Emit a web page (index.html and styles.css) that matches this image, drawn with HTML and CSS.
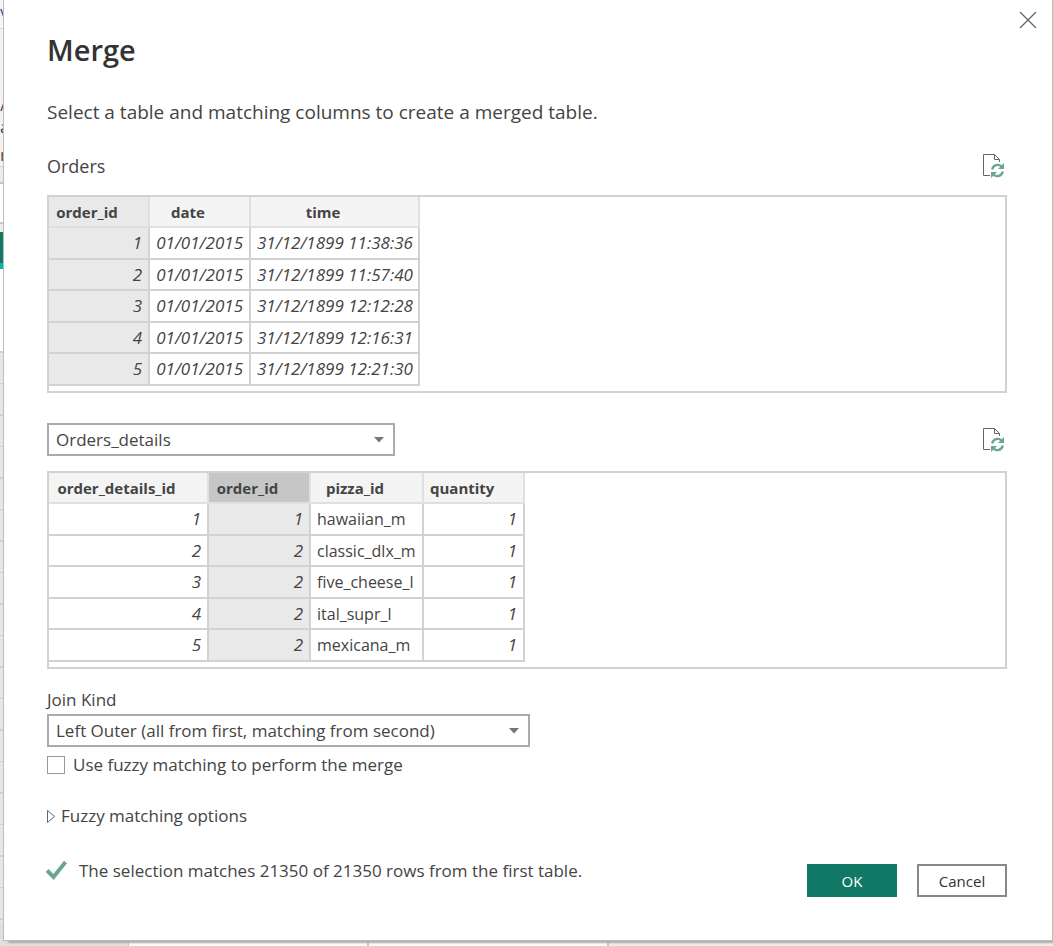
FILE: index.html
```html
<!DOCTYPE html>
<html lang="en">
<head>
<meta charset="utf-8">
<title>Merge</title>
<link rel="stylesheet" href="styles.css">
</head>
<body>
<div class="workspace" aria-hidden="true">
  <div class="ribbon-tabs">v</div>
  <div class="ribbon"><span>/</span><span>a</span><span class="group">r</span></div>
  <div class="ribbon-foot"></div>
  <div class="formula"></div>
  <div class="spacer"></div>
  <div class="query"></div>
  <div class="query-bar"></div>
  <div class="query-head"></div>
  <div class="row-numbers"></div>
  <div class="data-row"><div class="row-no"></div><div class="data">01/01/2015</div><div class="data">01/01/2015</div><div class="rest"></div></div>
</div>

<main class="dialog" role="dialog" aria-labelledby="title">
  <button class="close" type="button" aria-label="Close">
    <svg width="18" height="18" viewBox="0 0 18 18"><path d="M1 1L17 17M17 1L1 17" fill="none" stroke="#666" stroke-width="1.3"/></svg>
  </button>
  <h1 id="title">Merge</h1>
  <p class="intro">Select a table and matching columns to create a merged table.</p>

  <div class="bar first">
    <h2>Orders</h2>
    <button class="refresh" type="button" aria-label="Refresh Orders">
      <svg width="22" height="24" viewBox="0 0 22 24"><path d="M7 21.5H.5V.5H11.5L16.5 5.500V8M11.500.5V5.500H16.500" fill="none" stroke="#666"/><path d="M9.200 15.500A5.500 5.500 0 0 1 18.500 12.500M19.800 17.500A5.500 5.500 0 0 1 10.500 20.500" fill="none" stroke="#6aa793" stroke-width="2.400"/><path d="M21 9V15H15ZM8 24V18H14Z" fill="#6aa793"/></svg>
    </button>
  </div>
  <div class="preview">
    <table>
      <colgroup><col class="w-id"><col class="w-date"><col class="w-time"></colgroup>
      <thead><tr><th class="picked">order_id</th><th>date</th><th>time</th></tr></thead>
      <tbody>
        <tr><td class="picked">1</td><td>01/01/2015</td><td>31/12/1899 11:38:36</td></tr>
        <tr><td class="picked">2</td><td>01/01/2015</td><td>31/12/1899 11:57:40</td></tr>
        <tr><td class="picked">3</td><td>01/01/2015</td><td>31/12/1899 12:12:28</td></tr>
        <tr><td class="picked">4</td><td>01/01/2015</td><td>31/12/1899 12:16:31</td></tr>
        <tr><td class="picked">5</td><td>01/01/2015</td><td>31/12/1899 12:21:30</td></tr>
      </tbody>
    </table>
  </div>

  <div class="bar second">
    <div class="combo table-combo">
      <select aria-label="Second table"><option>Orders_details</option></select>
      <svg width="10" height="6" viewBox="0 0 10 6"><path d="M0 0H10L5 5.500Z" fill="#767676"/></svg>
    </div>
    <button class="refresh" type="button" aria-label="Refresh Orders_details">
      <svg width="22" height="24" viewBox="0 0 22 24"><path d="M7 21.5H.5V.5H11.5L16.5 5.500V8M11.500.5V5.500H16.500" fill="none" stroke="#666"/><path d="M9.200 15.500A5.500 5.500 0 0 1 18.500 12.500M19.800 17.500A5.500 5.500 0 0 1 10.500 20.500" fill="none" stroke="#6aa793" stroke-width="2.400"/><path d="M21 9V15H15ZM8 24V18H14Z" fill="#6aa793"/></svg>
    </button>
  </div>
  <div class="preview">
    <table>
      <colgroup><col class="w-details"><col class="w-order"><col class="w-pizza"><col class="w-id"></colgroup>
      <thead><tr><th>order_details_id</th><th class="picked active">order_id</th><th>pizza_id</th><th>quantity</th></tr></thead>
      <tbody>
        <tr><td>1</td><td class="picked">1</td><td class="text">hawaiian_m</td><td>1</td></tr>
        <tr><td>2</td><td class="picked">2</td><td class="text">classic_dlx_m</td><td>1</td></tr>
        <tr><td>3</td><td class="picked">2</td><td class="text">five_cheese_l</td><td>1</td></tr>
        <tr><td>4</td><td class="picked">2</td><td class="text">ital_supr_l</td><td>1</td></tr>
        <tr><td>5</td><td class="picked">2</td><td class="text">mexicana_m</td><td>1</td></tr>
      </tbody>
    </table>
  </div>

  <label class="join-label" for="join">Join Kind</label>
  <div class="combo join-combo">
    <select id="join"><option>Left Outer (all from first, matching from second)</option></select>
    <svg width="10" height="6" viewBox="0 0 10 6"><path d="M0 0H10L5 5.500Z" fill="#767676"/></svg>
  </div>
  <label class="fuzzy"><input type="checkbox">Use fuzzy matching to perform the merge</label>

  <button class="expander" type="button" aria-expanded="false">
    <svg width="8" height="13" viewBox="0 0 8 13"><path d="M.5 .5L7.500 6.500L.5 12.500Z" fill="none" stroke="#666"/></svg>
    Fuzzy matching options
  </button>

  <div class="footer">
    <p class="status">
      <svg width="22" height="20" viewBox="0 0 22 20"><path d="M1 9.500L7.500 16L19.500 1" fill="none" stroke="#6aa793" stroke-width="4"/></svg>
      The selection matches 21350 of 21350 rows from the first table.
    </p>
    <div class="actions">
      <button class="ok" type="button">OK</button>
      <button class="cancel" type="button">Cancel</button>
    </div>
  </div>
</main>
</body>
</html>
```
FILE: styles.css
```css
* { box-sizing: border-box; }

body {
  margin: 0;
  min-height: 100vh;
  display: grid;
  grid-template-columns: minmax(0, 1fr);
  overflow: hidden;
  font: 17px/24px "Open Sans", "Noto Sans", sans-serif;
  color: #444;
}

h1, h2, p { margin: 0; }
button, select { font: inherit; color: inherit; }
button { padding: 0; border: 0; background: none; }
svg { display: block; flex: none; }

/* Editor window behind the dialog */
.workspace {
  grid-area: 1 / 1;
  display: flex;
  flex-direction: column;
  background: #e6e6e6;
}
.ribbon-tabs { height: 29px; background: #f5f5f5; border-bottom: 1px solid #dcdcdc; color: #2b579a; line-height: 24px; }
.ribbon { height: 138px; display: flex; flex-direction: column; justify-content: flex-end; background: #f3f2f1; border-bottom: 1px solid #d2d0ce; line-height: 22px; }
.group { margin-top: 6px; }
.ribbon-foot { height: 17px; background: #edebe9; border-bottom: 2px solid #c8c6c4; }
.formula { height: 40px; background: #fff; border-bottom: 2px solid #c8c6c4; }
.spacer { height: 8px; background: #edebe9; }
.query { height: 31px; background: #117865; }
.query-bar { height: 6px; background: #01b8aa; }
.query-head { height: 84px; background: #fff; border-bottom: 2px solid #d0d0d0; }
.row-numbers {
  flex: 1;
  background: repeating-linear-gradient(#e6e6e6 0 30px, #d0d0d0 30px 31px, #e6e6e6 31px 61px, #d0d0d0 61px 63px);
}
.data-row { height: 24px; display: flex; font-style: italic; font-size: 17px; line-height: 24px; }
.row-no { width: 129px; border-right: 1px solid #c8c8c8; background: #e0e0e0; }
.data { width: 240px; padding-left: 142px; border-right: 2px solid #c8c8c8; background: #fff; }
.data + .data { padding-left: 74px; }
.rest { flex: 1; background: #f0efed; }

/* Dialog */
.dialog {
  grid-area: 1 / 1;
  position: relative;
  display: flex;
  flex-direction: column;
  margin: 0 0 5px 3px;
  padding: 30px 45px 43px 43px;
  border: solid #bebebe;
  border-width: 0 1px 1px;
  background: #fff;
  box-shadow: 5px 2px 2px #aaa;
}
.close { position: absolute; top: 11px; right: 15px; }

h1 { font-size: 29px; line-height: 40px; font-weight: 600; color: #333; }
.intro { margin-top: 28px; font-size: 19px; line-height: 28px; }

.bar { display: flex; align-items: center; justify-content: space-between; margin-bottom: 15px; }
.bar.first { margin-top: 26px; }
.bar.second { margin-top: 30px; }
h2 { font-size: 18px; line-height: 28px; font-weight: 400; }
.refresh { margin-right: 2px; }

.preview { border: 2px solid #d2d2d2; padding-bottom: 5px; }
table { border-collapse: separate; border-spacing: 0; table-layout: fixed; width: 0; font-size: 17px; line-height: 20px; }
.w-id, .w-date { width: 101px; }
.w-time { width: 169px; }
.w-details { width: 160px; }
.w-order { width: 102px; }
.w-pizza { width: 113px; }
th, td { padding: 0 6px; border: solid #d2d2d2; border-width: 0 2px 2px 0; white-space: nowrap; }
th { height: 31px; padding-right: 29px; background: #f4f4f4; border-color: #e0e0e0; font-size: 15px; font-weight: 700; text-align: center; }
td { height: 32px; font-style: italic; text-align: right; }
tr:nth-child(even) td { height: 31px; }
.picked { background: #e9e9e9; }
.active { background: #c6c6c6; }
td.text { font-size: 16px; font-style: normal; text-align: left; }

.combo { display: grid; align-items: center; max-width: 100%; }
.table-combo { width: 348px; }
.join-combo { width: 483px; margin-top: 2px; }
.combo select {
  grid-area: 1 / 1;
  appearance: none;
  height: 33px;
  width: 100%;
  padding: 1px 30px 0 7px;
  border: 2px solid #ababab;
  border-radius: 0;
  background: #fff;
}
.combo svg { grid-area: 1 / 1; justify-self: end; margin-right: 11px; pointer-events: none; }

.join-label { margin-top: 19px; }
.fuzzy { display: flex; align-items: center; gap: 8px; margin-top: 6px; }
.fuzzy input { appearance: none; width: 18px; height: 18px; margin: 0; border: 1px solid #999; background: #fff; }
.expander { display: flex; align-items: center; gap: 6px; align-self: flex-start; margin-top: 27px; }

.footer { display: flex; align-items: flex-start; justify-content: space-between; margin-top: 31px; }
.status { display: flex; align-items: center; gap: 11px; margin-left: -1px; }
.actions { display: flex; gap: 20px; margin-top: 5px; font-size: 15px; }
.actions button { width: 90px; height: 33px; }
.ok { background: #117865; color: #fff; }
.cancel { border: 2px solid #888; color: #333; }
```
